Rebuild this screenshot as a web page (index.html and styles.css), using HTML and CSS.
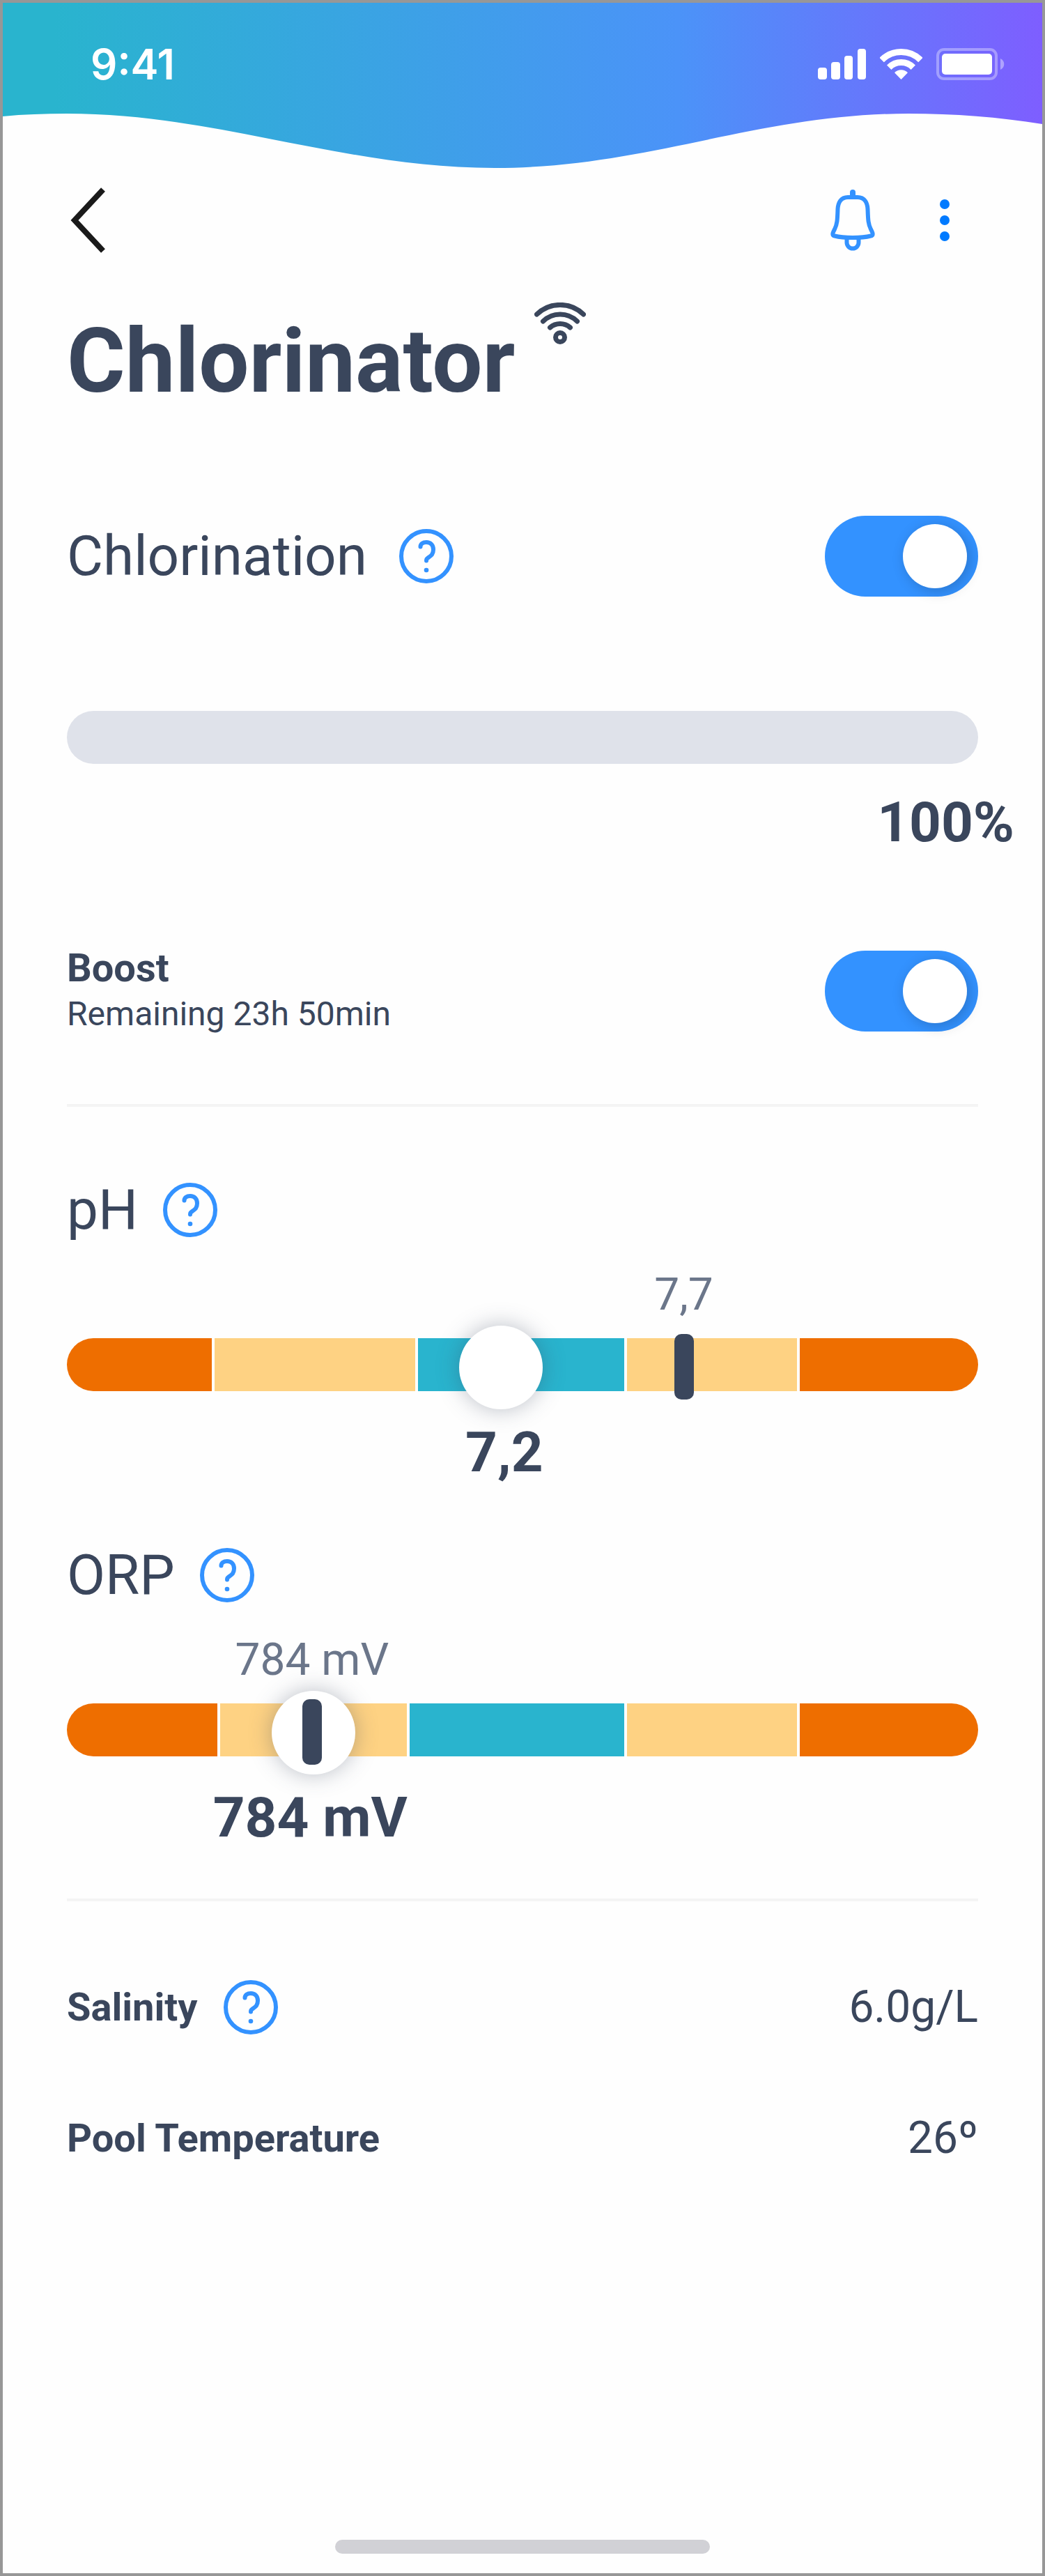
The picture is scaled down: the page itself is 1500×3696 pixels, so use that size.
FILE: index.html
```
<!DOCTYPE html>
<html lang="en">
<head>
  <meta charset="UTF-8" />
  <meta name="viewport" content="width=device-width, initial-scale=1.0"/>
  <title>Chlorinator</title>
  <link rel="stylesheet" href="styles.css">
</head>
<body>
  <!-- shared question mark icon -->
  <svg class="sprite" aria-hidden="true">
    <symbol id="icon-help" viewBox="0 0 78 78">
      <circle cx="39" cy="39" r="36" fill="none" stroke="currentColor" stroke-width="6"/>
      <path d="M30.5 25.5C30.5 21.5 34 19 39 19c6 0 10 4 10 10.5S46 38 42.5 40.5 39 43.5 39 45.5" fill="none" stroke="currentColor" stroke-width="6" stroke-linecap="round"/>
      <circle cx="39" cy="59" r="3.3" fill="currentColor"/>
    </symbol>
  </svg>

  <header class="header">
    <svg class="wave" viewBox="0 0 1492 237" preserveAspectRatio="none" aria-hidden="true">
      <defs>
        <linearGradient id="wave-fill" x1="0" x2="1" y1="0" y2="0">
          <stop offset="0.05" stop-color="#29b4ce"/>
          <stop offset="0.65" stop-color="#4b93f8"/>
          <stop offset="1" stop-color="#7e5eff"/>
        </linearGradient>
      </defs>
      <path d="M0 0H1492V174C1430 164 1365 159 1300 159C1084 159 924 237 706 237C488 237 308 159 92 159C60 159 30 160 0 163Z" fill="url(#wave-fill)"/>
    </svg>
    <div class="status-bar">
      <span class="time">9:41</span>
      <div class="status-icons">
        <svg width="69" height="44" viewBox="0 0 69 44" fill="#fff" aria-hidden="true">
          <rect x="0" y="27" width="13" height="17" rx="4"/>
          <rect x="19" y="19" width="13" height="25" rx="4"/>
          <rect x="38" y="10" width="12" height="34" rx="4"/>
          <rect x="57" y="0" width="12" height="44" rx="4"/>
        </svg>
        <svg width="61" height="44" viewBox="0 0 61 44" aria-hidden="true">
          <path d="M2.6 16.1A39.5 39.5 0 0 1 58.4 16.1" fill="none" stroke="#fff" stroke-width="9"/>
          <path d="M13.2 26.7A24.5 24.5 0 0 1 47.8 26.7" fill="none" stroke="#fff" stroke-width="9"/>
          <path d="M30.5 44L21 34.2A13.5 13.5 0 0 1 40 34.2Z" fill="#fff"/>
        </svg>
        <svg width="98" height="46" viewBox="0 0 98 46" aria-hidden="true">
          <rect x="2" y="2" width="84" height="42" rx="9" fill="none" stroke="#fff" stroke-opacity="0.35" stroke-width="4"/>
          <rect x="8" y="8" width="72" height="30" rx="5" fill="#fff"/>
          <path d="M92 15C99 18 99 28 92 31Z" fill="#fff" fill-opacity="0.4"/>
        </svg>
      </div>
    </div>
  </header>

  <main class="content">
    <nav class="toolbar">
      <button class="icon-btn back" type="button" aria-label="Back">
        <svg width="56" height="96" viewBox="0 0 56 96" fill="none" stroke="#1a1a1a" stroke-width="8">
          <path d="M52 4L11 48L52 92"/>
        </svg>
      </button>
      <div class="toolbar-actions">
        <button class="icon-btn bell" type="button" aria-label="Notifications">
          <svg width="64" height="88" viewBox="0 0 64 88" fill="none" stroke="currentColor" stroke-width="6">
            <path d="M32 4V9" stroke-width="8" stroke-linecap="round"/>
            <path d="M25 11H39C49 11 53 19 53.500 28C54 42 54 49 58 57C62 64 61 66 58 66.500C48 69 40 69 32 69C24 69 16 69 6 66.500C3 66 2 64 6 57C10 49 10 42 10.500 28C11 19 15 11 25 11Z"/>
            <path d="M23.500 70V76A8.500 8.500 0 0 0 40.500 76V70"/>
          </svg>
        </button>
        <button class="icon-btn more" type="button" aria-label="More options">
          <svg width="14" height="60" viewBox="0 0 14 60" fill="currentColor">
            <circle cx="7" cy="7" r="7"/>
            <circle cx="7" cy="30" r="7"/>
            <circle cx="7" cy="53" r="7"/>
          </svg>
        </button>
      </div>
    </nav>

    <div class="title-row">
      <h1>Chlorinator</h1>
      <svg width="74" height="60" viewBox="0 0 74 60" fill="none" stroke="#3a465c" stroke-width="7" stroke-linecap="round" role="img" aria-label="Connected">
        <path d="M3.500 17A48 48 0 0 1 70.500 17"/>
        <path d="M12.500 27A35 35 0 0 1 61.500 27"/>
        <path d="M22.500 36A22 22 0 0 1 51.500 36"/>
        <circle cx="37" cy="50" r="6.500"/>
      </svg>
    </div>

    <div class="row chlorination">
      <div class="heading wide">
        <label for="chlorination">Chlorination</label>
        <button class="help" type="button" aria-label="About chlorination"><svg><use href="#icon-help"/></svg></button>
      </div>
      <input class="toggle" type="checkbox" id="chlorination" checked>
    </div>

    <progress class="level" max="100" value="100" aria-label="Chlorination level"></progress>
    <div class="level-value">100%</div>

    <div class="row boost">
      <label class="boost-text" for="boost">
        <strong>Boost</strong>
        <span>Remaining 23h 50min</span>
      </label>
      <input class="toggle" type="checkbox" id="boost" checked>
    </div>

    <hr>

    <section class="gauge ph">
      <div class="heading">
        <label for="ph">pH</label>
        <button class="help" type="button" aria-label="About pH"><svg><use href="#icon-help"/></svg></button>
      </div>
      <div class="reading" style="margin-left: 67.7%">7,7</div>
      <div class="scale">
        <div class="zone bad" style="flex-grow: 208"></div>
        <div class="zone warn" style="flex-grow: 288"></div>
        <div class="zone good" style="flex-grow: 296"></div>
        <div class="zone warn" style="flex-grow: 244"></div>
        <div class="zone bad" style="flex-grow: 256"></div>
        <input class="slider" type="range" id="ph" min="6" max="8.53" step="0.01" value="7.2">
        <div class="marker" style="left: 67.7%"></div>
      </div>
      <div class="setpoint" style="margin-left: 48%">7,2</div>
    </section>

    <section class="gauge orp">
      <div class="heading">
        <label for="orp">ORP</label>
        <button class="help" type="button" aria-label="About ORP"><svg><use href="#icon-help"/></svg></button>
      </div>
      <div class="reading" style="margin-left: 26.9%">784 mV</div>
      <div class="scale">
        <div class="zone bad" style="flex-grow: 216"></div>
        <div class="zone warn" style="flex-grow: 268"></div>
        <div class="zone good" style="flex-grow: 308"></div>
        <div class="zone warn" style="flex-grow: 244"></div>
        <div class="zone bad" style="flex-grow: 256"></div>
        <input class="slider" type="range" id="orp" min="700" max="1040" value="784">
        <div class="marker" style="left: 26.9%"></div>
      </div>
      <div class="setpoint" style="margin-left: 26.7%">784 mV</div>
    </section>

    <hr>

    <dl class="stats">
      <div class="row">
        <dt>Salinity <button class="help" type="button" aria-label="About salinity"><svg><use href="#icon-help"/></svg></button></dt>
        <dd>6.0g/L</dd>
      </div>
      <div class="row">
        <dt>Pool Temperature</dt>
        <dd>26º</dd>
      </div>
    </dl>
  </main>

  <div class="home-indicator"></div>
</body>
</html>
```
FILE: styles.css
```
* {
  box-sizing: border-box;
}

body {
  margin: 0;
  min-height: 100vh;
  display: flex;
  flex-direction: column;
  border: 4px solid #979797;
  background: #fefefe;
  color: #3a465c;
  font-family: Roboto, "Liberation Sans", sans-serif;
}

button {
  padding: 0;
  border: none;
  background: none;
  cursor: pointer;
}

svg {
  display: block;
  flex-shrink: 0;
}

.sprite {
  position: absolute;
  width: 0;
  height: 0;
}

/* header */

.header {
  position: relative;
  height: 240px;
  padding: 52px 54px 0 126px;
}

.wave {
  position: absolute;
  top: 0;
  left: 0;
  width: 100%;
  height: 237px;
}

.status-bar {
  position: relative;
  display: flex;
  align-items: center;
  justify-content: space-between;
  height: 72px;
  color: white;
}

.time {
  font-family: Inter, Roboto, sans-serif;
  font-size: 60px;
  font-weight: 600;
  line-height: 72px;
}

.status-icons {
  display: flex;
  align-items: center;
  gap: 20px;
}

/* content */

.content {
  padding: 24px 92px 80px;
}

.toolbar,
.toolbar-actions,
.row,
.heading {
  display: flex;
  align-items: center;
}

.toolbar,
.row {
  justify-content: space-between;
}

.toolbar-actions {
  gap: 36px;
}

.icon-btn {
  display: flex;
  align-items: center;
  justify-content: center;
  width: 96px;
  height: 96px;
}

.back {
  justify-content: flex-start;
}

.bell {
  color: #3392ff;
}

.more {
  color: #007aff;
}

.title-row {
  display: flex;
  align-items: flex-start;
  gap: 28px;
  margin-top: 70px;
}

h1 {
  margin: 0;
  font-size: 128px;
  font-weight: 700;
  line-height: 168px;
}

.heading {
  gap: 36px;
  font-size: 80px;
  line-height: 96px;
}

.heading.wide {
  gap: 46px;
}

.help {
  width: 78px;
  height: 78px;
  color: #3392ff;
}

.help svg {
  width: 78px;
  height: 78px;
}

.chlorination {
  margin-top: 138px;
}

.toggle {
  appearance: none;
  width: 220px;
  height: 116px;
  margin: 0;
  padding: 12px 16px;
  border-radius: 58px;
  background: #dfe2ea;
  cursor: pointer;
}

.toggle::before {
  content: "";
  display: block;
  width: 92px;
  height: 92px;
  border-radius: 50%;
  background: white;
  box-shadow: 4px 4px 20px rgba(0, 0, 0, 0.2);
}

.toggle:checked {
  background: #3392ff;
}

.toggle:checked::before {
  margin-left: auto;
}

.level {
  appearance: none;
  display: block;
  width: 100%;
  height: 76px;
  margin-top: 164px;
  border: none;
  border-radius: 38px;
  background: #dfe2ea;
  overflow: hidden;
}

.level::-webkit-progress-bar,
.level::-webkit-progress-value {
  background: #dfe2ea;
}

/* the value hangs a little past the end of the bar */
.level-value {
  margin: 36px -52px 0 0;
  font-size: 80px;
  font-weight: 700;
  line-height: 96px;
  text-align: right;
}

.boost {
  margin-top: 128px;
}

.boost-text {
  display: flex;
  flex-direction: column;
  font-size: 48px;
  line-height: 66px;
}

.boost-text strong {
  font-size: 56px;
}

hr {
  width: 100%;
  height: 4px;
  margin: 0;
  border: none;
  background: #f4f4f4;
}

.boost + hr {
  margin-top: 96px;
}

.orp + hr {
  margin-top: 68px;
}

/* gauges */

.ph {
  margin-top: 100px;
}

.orp {
  margin-top: 80px;
}

.reading,
.setpoint {
  width: fit-content;
  transform: translateX(-50%);
  white-space: nowrap;
}

.reading {
  margin-top: 36px;
  color: #6b768a;
  font-size: 64px;
  line-height: 76px;
}

.setpoint {
  margin-top: 40px;
  font-size: 80px;
  font-weight: 700;
  line-height: 96px;
}

.scale {
  position: relative;
  display: flex;
  gap: 4px;
  margin-top: 24px;
}

.zone {
  flex-basis: 0;
  height: 76px;
}

.zone:first-child {
  border-radius: 38px 0 0 38px;
}

.zone:nth-child(5) {
  border-radius: 0 38px 38px 0;
}

.bad {
  background: #ee6e00;
}

.warn {
  background: #fed283;
}

.good {
  background: #29b4ce;
}

.slider {
  appearance: none;
  position: absolute;
  top: -18px;
  left: 0;
  width: 100%;
  height: 120px;
  margin: 0;
  background: transparent;
}

.slider::-webkit-slider-thumb {
  appearance: none;
  width: 120px;
  height: 120px;
  border-radius: 50%;
  background: white;
  box-shadow: 0 0 32px rgba(58, 70, 92, 0.35);
}

.marker {
  position: absolute;
  top: -6px;
  width: 28px;
  height: 94px;
  border-radius: 10px;
  background: #3a465c;
  transform: translateX(-50%);
  pointer-events: none;
}

/* stats */

.stats {
  display: flex;
  flex-direction: column;
  gap: 92px;
  margin: 104px 0 0;
}

.stats dt {
  display: flex;
  align-items: center;
  gap: 38px;
  font-size: 56px;
  font-weight: 700;
  line-height: 96px;
}

.stats dd {
  margin: 0;
  font-size: 64px;
  line-height: 96px;
}

.home-indicator {
  width: 36%;
  height: 20px;
  margin: auto auto 28px;
  border-radius: 10px;
  background: #d1d1d6;
}
```
